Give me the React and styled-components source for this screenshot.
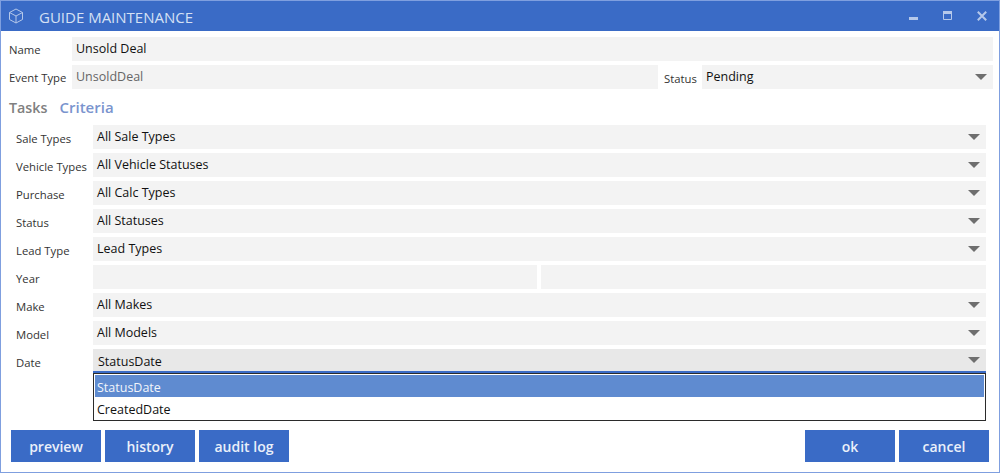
import React from "react";
import styled, { createGlobalStyle } from "styled-components";

const GlobalStyle = createGlobalStyle`
	html, body {
		margin: 0;
		padding: 0;
		background: #fff;
	}
	* {
		box-sizing: border-box;
	}
`;

const criteria = [
	{ label: "Sale Types", value: "All Sale Types" },
	{ label: "Vehicle Types", value: "All Vehicle Statuses" },
	{ label: "Purchase", value: "All Calc Types" },
	{ label: "Status", value: "All Statuses" },
	{ label: "Lead Type", value: "Lead Types" },
	{ label: "Year", year: true },
	{ label: "Make", value: "All Makes" },
	{ label: "Model", value: "All Models" },
];

function Select({ value, open }) {
	return (
		<SelectC $open={open}>
			<span>{value}</span>
			<ArrowC $open={open} />
		</SelectC>
	);
}

function App() {
	return (
		<WindowC>
			<GlobalStyle />
			<TitleBarC>
				<TitleIconC viewBox="0 0 16 16">
					<path d="M8 1 L14.5 4.5 V11.5 L8 15 L1.5 11.5 V4.5 Z M1.5 4.5 L8 8 L14.5 4.5 M8 8 V15" />
				</TitleIconC>
				<TitleC>GUIDE MAINTENANCE</TitleC>
				<WindowButtonsC>
					<svg width="10" height="10" viewBox="0 0 10 10">
						<rect x="0" y="6" width="9" height="3" fill="#b5c8ea" />
					</svg>
					<svg width="10" height="10" viewBox="0 0 10 10">
						<path d="M.5.5h8v8h-8z" fill="none" stroke="#b5c8ea" />
						<rect x="0" y="0" width="9" height="3" fill="#b5c8ea" />
					</svg>
					<svg width="10" height="10" viewBox="0 0 10 10">
						<path d="M.8.8l8.4 8.4M9.2.8L.8 9.2" fill="none" stroke="#b5c8ea" strokeWidth="2" />
					</svg>
				</WindowButtonsC>
			</TitleBarC>

			<BodyC>
				<NameRowC>
					<HeadLabelC>Name</HeadLabelC>
					<FieldC>Unsold Deal</FieldC>
				</NameRowC>
				<EventRowC>
					<HeadLabelC>Event Type</HeadLabelC>
					<FieldC $muted>UnsoldDeal</FieldC>
					<StatusLabelC>Status</StatusLabelC>
					<Select value="Pending" />
				</EventRowC>

				<TabsC>
					<TabC>Tasks</TabC>
					<TabC $active>Criteria</TabC>
				</TabsC>

				<CriteriaC>
					{criteria.map((row) => (
						<CriteriaRowC key={row.label}>
							<RowLabelC>{row.label}</RowLabelC>
							{row.year ? (
								<YearC>
									<FieldC />
									<FieldC />
								</YearC>
							) : (
								<Select value={row.value} />
							)}
						</CriteriaRowC>
					))}
					<DateRowC>
						<RowLabelC>Date</RowLabelC>
						<DateBoxC>
							<Select value="StatusDate" open />
							<ListC>
								<OptionC $selected>StatusDate</OptionC>
								<OptionC>CreatedDate</OptionC>
							</ListC>
						</DateBoxC>
					</DateRowC>
				</CriteriaC>

				<FooterC>
					<ButtonGroupC>
						<ButtonC>preview</ButtonC>
						<ButtonC>history</ButtonC>
						<ButtonC>audit log</ButtonC>
					</ButtonGroupC>
					<ButtonGroupC>
						<ButtonC>ok</ButtonC>
						<ButtonC>cancel</ButtonC>
					</ButtonGroupC>
				</FooterC>
			</BodyC>
		</WindowC>
	);
}

const WindowC = styled.div`
	width: 1000px;
	height: 473px;
	display: flex;
	flex-direction: column;
	background: #fff;
	border: 1px solid #7f9fdf;
	font-family: "Open Sans", "Liberation Sans", sans-serif;
	font-size: 12px;
	color: #222;
	overflow: hidden;
`;

const TitleBarC = styled.div`
	height: 30px;
	flex: none;
	display: flex;
	align-items: center;
	padding: 0 12px 0 7px;
	background: #3a6bc6;
`;

const TitleIconC = styled.svg`
	width: 16px;
	height: 16px;
	fill: none;
	stroke: #b5c8ea;
	stroke-width: 1;
`;

const TitleC = styled.div`
	margin-left: 15px;
	padding-top: 1px;
	font-size: 15px;
	color: #d5e0f4;
`;

const WindowButtonsC = styled.div`
	margin-left: auto;
	display: flex;
	align-items: center;
	gap: 24px;
`;

const BodyC = styled.div`
	flex: 1;
	display: flex;
	flex-direction: column;
	padding: 6px 6px 0 8px;
`;

const NameRowC = styled.div`
	display: grid;
	grid-template-columns: 63px 1fr;
	height: 24px;
`;

const EventRowC = styled.div`
	display: grid;
	grid-template-columns: 63px 586px 44px 291px;
	height: 24px;
	margin-top: 4px;
`;

const HeadLabelC = styled.div`
	padding-top: 5px;
	font-size: 11.3px;
	color: #333;
	white-space: nowrap;
`;

const StatusLabelC = styled(HeadLabelC)`
	padding-left: 6px;
	padding-top: 6px;
`;

const FieldC = styled.div`
	height: 24px;
	padding: 3px 4px 0;
	background: #f3f3f3;
	font-size: 12.5px;
	color: ${(p) => (p.$muted ? "#666" : "#111")};
`;

const SelectC = styled.div`
	height: 24px;
	display: flex;
	justify-content: space-between;
	padding: ${(p) => (p.$open ? "4px 6px 0 5px" : "3px 6px 0 4px")};
	background: ${(p) => (p.$open ? "#e8e8e8" : "#f3f3f3")};
	border-bottom: ${(p) => (p.$open ? "2px solid #3a6bc6" : "none")};
	font-size: 12.5px;
	color: #111;
`;

const ArrowC = styled.i`
	margin-top: ${(p) => (p.$open ? "4px" : "6px")};
	width: 0;
	height: 0;
	border-left: 6px solid transparent;
	border-right: 6px solid transparent;
	border-top: 6px solid #6e6e6e;
`;

const TabsC = styled.div`
	display: flex;
	align-items: baseline;
	gap: 12px;
	height: 24px;
	margin-top: 8px;
	font-weight: 600;
`;

const TabC = styled.div`
	font-size: ${(p) => (p.$active ? "15px" : "14.3px")};
	color: ${(p) => (p.$active ? "#7a94ce" : "#808080")};
`;

const CriteriaC = styled.div`
	display: flex;
	flex-direction: column;
	gap: 4px;
	margin-top: 4px;
	width: 977px;
`;

const CriteriaRowC = styled.div`
	display: grid;
	grid-template-columns: 84px 1fr;
	height: 24px;
`;

const DateRowC = styled(CriteriaRowC)`
	height: 72px;
`;

const RowLabelC = styled.div`
	padding: 6px 0 0 7px;
	font-size: 11.3px;
	color: #333;
	white-space: nowrap;
`;

const YearC = styled.div`
	display: grid;
	grid-template-columns: 444px 1fr;
	gap: 4px;
`;

const DateBoxC = styled.div`
	display: flex;
	flex-direction: column;
`;

const ListC = styled.div`
	height: 48px;
	padding: 1px;
	background: #fff;
	border: 1px solid #2b2b2b;
`;

const OptionC = styled.div`
	height: 22px;
	padding: 4px 2px 0;
	font-size: 12.5px;
	background: ${(p) => (p.$selected ? "#5f8bd0" : "#fff")};
	color: ${(p) => (p.$selected ? "#f2f5fb" : "#111")};
`;

const FooterC = styled.div`
	display: flex;
	justify-content: space-between;
	margin-top: 9px;
	padding: 0 4px 0 2px;
`;

const ButtonGroupC = styled.div`
	display: flex;
	gap: 4px;
`;

const ButtonC = styled.button`
	width: 90px;
	height: 32px;
	padding: 0;
	border: none;
	background: #3a6bc6;
	color: #eaf0fa;
	font-family: inherit;
	font-size: 14px;
	font-weight: 600;
`;

export default App;
